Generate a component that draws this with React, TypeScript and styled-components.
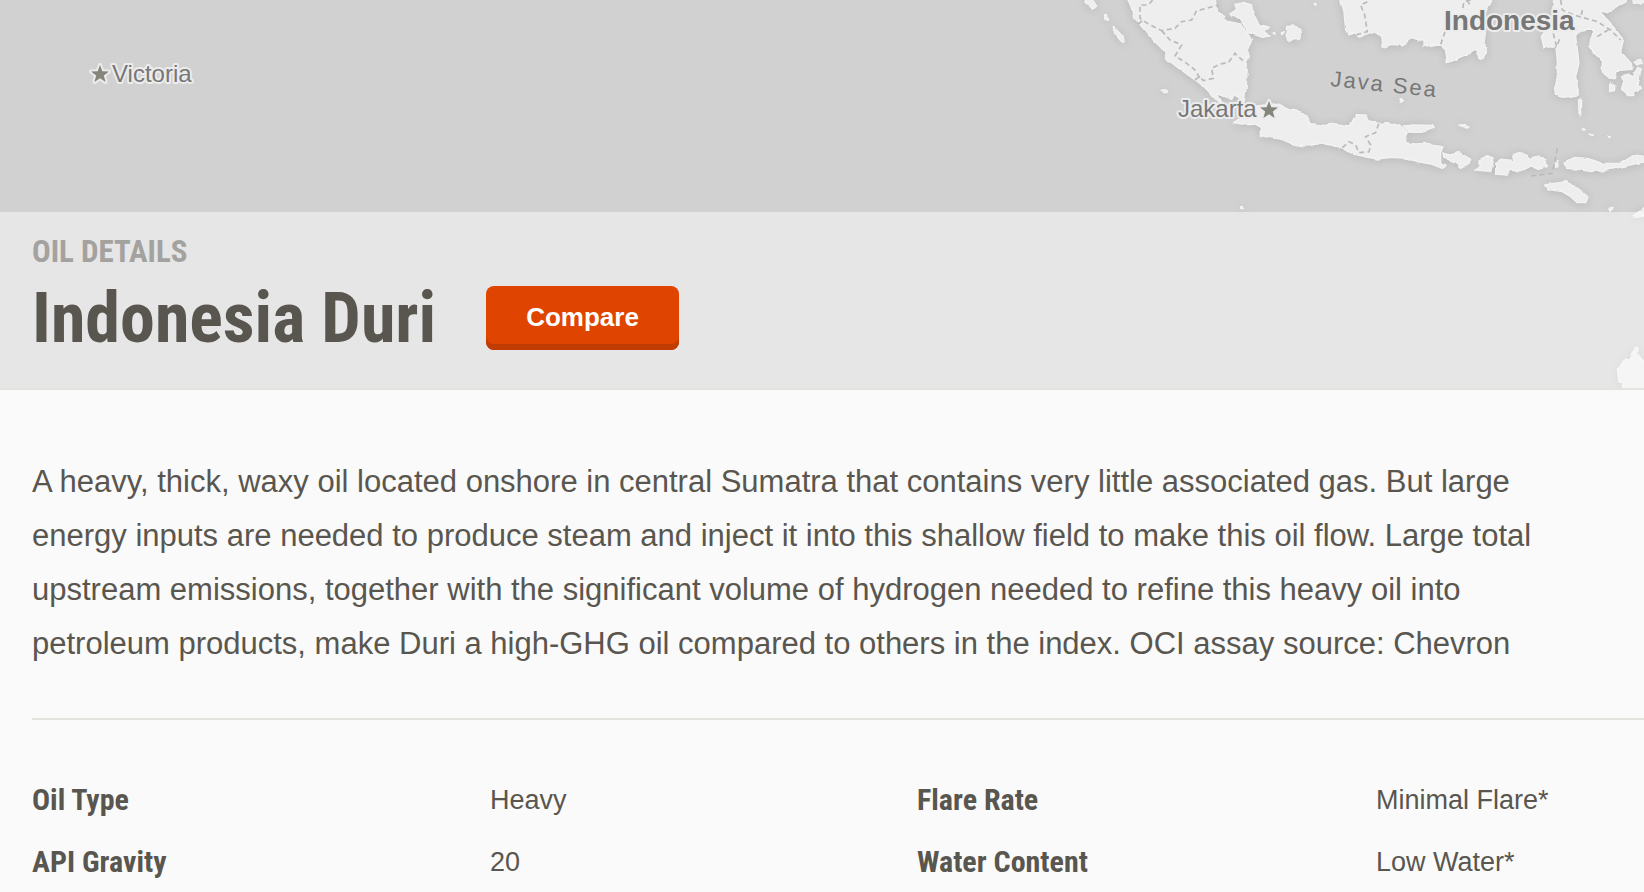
import React from "react";
import styled, { createGlobalStyle } from "styled-components";

const GlobalStyle = createGlobalStyle`
  *, *::before, *::after { box-sizing: border-box; }
  body {
    margin: 0;
    background: #fafafa;
    color: #59564f;
    font-family: "Liberation Sans", Arial, sans-serif;
    overflow-x: hidden;
  }
`;

const condensed = `"Roboto Condensed", "Arial Narrow", sans-serif`;

const Hero = styled.section`
  position: relative;
  padding-top: 212px;
  background: #d1d1d1;
  border-bottom: 2px solid #e3e4de;
  overflow: hidden;
`;

const MapCanvas = styled.svg`
  position: absolute;
  inset: 0;
  width: 100%;
  height: 100%;
`;

const Coast = styled.g`
  fill: #eeeeee;
  stroke: #f3f3f3;
  stroke-width: 4;
  stroke-linejoin: round;
`;

const Borders = styled.g`
  fill: none;
  stroke: #bababa;
  stroke-width: 5;
  stroke-dasharray: 15 10;
`;

const PlaceLabel = styled.text<{ $country?: boolean }>`
  font-size: ${(p) => (p.$country ? 28 : 24)}px;
  font-weight: ${(p) => (p.$country ? 700 : 400)};
  fill: #777777;
  stroke: #ececec;
  stroke-width: 4px;
  stroke-linejoin: round;
  paint-order: stroke;
`;

const SeaLabel = styled.text`
  font-size: 22px;
  letter-spacing: 2px;
  fill: #777777;
`;

const Star = styled.path`
  fill: #85857c;
  stroke: #ececec;
  stroke-width: 4px;
  stroke-linejoin: round;
  paint-order: stroke;
`;

const TitleBar = styled.header`
  position: relative;
  padding: 24px 32px 30px;
  background: rgba(252, 252, 252, 0.5);
`;

const Eyebrow = styled.p`
  margin: 0 0 10px;
  font: 700 31px/32px ${condensed};
  text-transform: uppercase;
  color: #a3a29f;
`;

const TitleRow = styled.div`
  display: flex;
  align-items: center;
  gap: 50px;
`;

const Title = styled.h1`
  margin: 0;
  font: 700 70px/80px ${condensed};
`;

const CompareButton = styled.button`
  height: 64px;
  padding: 0 40px 2px;
  border: 0;
  border-radius: 8px;
  background: #df4500;
  box-shadow: inset 0 -6px 0 #bf3d03;
  color: #ffffff;
  font: 700 26px/32px "Liberation Sans", Arial, sans-serif;
  cursor: pointer;
`;

const Content = styled.main`
  padding: 65px 0 0 32px;
`;

const Description = styled.p`
  margin: 0;
  padding: 0 96px 47px 0;
  font-size: 31px;
  line-height: 54px;
`;

const Facts = styled.div`
  display: grid;
  grid-template-columns: 885fr 727fr;
  border-top: 2px solid #e3e4de;
  padding-top: 49px;
`;

const FactList = styled.dl<{ $columns: string }>`
  display: grid;
  grid-template-columns: ${(p) => p.$columns};
  align-content: start;
  margin: 0;
`;

const FactName = styled.dt`
  font: 700 30px/62px ${condensed};
`;

const FactValue = styled.dd`
  margin: 0;
  font-size: 27px;
  line-height: 62px;
`;

const starPath = "M0-9 2.3-2.8 9-2.6 3.8 1.4 5.6 8 0 4.2-5.6 8-3.8 1.4-9-2.6-2.3-2.8Z";

const westernLand = [
  "M200-10 215 25 220 50 245 80 270 110 315 155 318 175 350 200 405 240 430 258 460 290 478 310 486 308 472 282 490 288 515 298 522 280 535 292 552 306 558 270 562 205 552 185 568 170 562 150 575 122 568 108 545 72 490 62 495 48 470 35 465-10Z",
  "M510 42 530 28 525 14 550 7 575 15 582 50 600 75 628 82 615 93 630 108 608 112 565 98 555 75 540 55 515 48Z",
  "M680 80 700 78 722 88 725 105 715 120 705 115 685 125 678 105Z",
  "M75-5 95-5 110 18 100 27 80 12Z",
  "M130 45 138 43 148 62 135 58Z",
  "M160 78 175 95 190 110 192 130 180 120 160 95Z",
  "M303 268 318 266 323 276 312 278Z",
  "M542 620 548 620 547 626 542 626Z",
  "M764 12 771 10 771 15 767 17Z",
  "M640 98 644 98 644 102 640 102Z",
  "M664 97 670 98 668 103 664 102Z",
];

const easternLand = [
  "M-332 368-307 352-300 340-262 318-212 312-187 318-162 330-132 335-112 350-102 370-62 376-22 371 18 378 30 355 38 344 63 345 73 362 103 370 133 368 140 377 170 375 190 398 182 412 187 428 215 432 250 430 297 438 290 460 290 490 303 500 295 505 260 492 220 485 190 475 140 472 100 477 48 467 28 462-7 443-52 432-82 432-112 438-152 433-187 418-227 412-255 405-247 386-252 380-272 370-307 372Z",
  "M180 378 210 375 265 376 270 383 245 390 230 397 195 397Z",
  "M-12-5 0 35 5 90 15 105 30 98 45 110 80 98 110 105 115 145 165 130 175 138 205 112 240 125 240 140 285 132 305 150 310 188 400 150 405 178 418 175 428 145 420 130 425 90 410 80 430 20 445-5Z",
  "M630-5 625 40 605 90 592 110 600 145 635 135 640 180 640 230 632 265 635 285 660 292 700 285 703 275 695 230 705 190 695 105 725 88 750 88 735 140 775 180 775 215 800 238 815 235 815 212 865 208 862 190 830 155 838 120 800 70 765 32 790 38 840 5 850-5Z",
  "M832 228 858 222 866 232 878 205 890 210 885 240 878 252 893 265 870 275 865 290 850 290 845 275 832 265 840 248Z",
  "M870 185 890 178 895 190 880 198Z",
  "M800 250 812 258 812 272 800 275Z",
  "M866-5 905-5 905 10 890 12 880 5 868 8Z",
  "M704 300 710 298 710 345 705 340Z",
  "M297 460 320 465 345 457 380 478 375 490 352 502 335 485 300 475Z",
  "M405 480 430 467 450 475 440 515 415 512 392 510 405 500Z",
  "M455 490 480 478 510 482 505 465 525 458 548 462 555 480 575 470 605 475 610 500 580 508 565 495 530 512 500 512 490 525 455 522Z",
  "M632 490 640 485 642 500 634 502Z",
  "M660 490 690 472 730 475 780 490 830 490 870 465 905 470 905 485 850 497 780 512 740 515 700 508 670 505Z",
  "M602 555 640 548 670 545 690 560 715 575 732 592 725 608 700 608 680 590 655 575 610 568Z",
  "M348 375 365 373 376 380 360 381Z",
  "M168 297 176 295 178 302 171 304Z",
  "M715 386 724 389 718 391Z",
  "M732 402 750 406 740 406Z",
  "M792 407 799 407 797 411Z",
  "M792 628 808 622 805 632 795 634Z",
  "M866 648 885 635 905 620 905 645 870 655Z",
  "M835 1170 835 1150 825 1150 820 1105 845 1080 862 1078 863 1062 876 1038 882 1045 880 1060 905 1095 905 1170Z",
];

const westernBorders = [
  "M278 0 265 15 240 15 240 55 262 70 305 92 345 85 365 65 395 60 410 32 440 25 475 15",
  "M235 72 250 60",
  "M305 92 330 120 365 135 345 168 380 190 405 210 420 235",
  "M405 240 418 230 430 242 460 235 455 205 480 192 505 188 525 160 555 188",
];

const easternBorders = [
  "M70 5 50 15 62 45 70 95 35 105",
  "M380 0 360 5 355 30 M303 95 288 140",
  "M370 0 380 20",
  "M-5 443 15 425 35 435 45 458 75 455 80 435 65 410 95 398 105 368",
  "M650 0 655 30 690 45 760 65 800 90 830 120",
  "M715 30 710 55 M760 110 800 85",
  "M628 100 638 140 650 110",
  "M640 445 625 520 560 528",
];

function RegionMap() {
  return (
    <MapCanvas viewBox="0 0 1644 388" preserveAspectRatio="xMaxYMin slice" role="img" aria-label="Map of Indonesia">
      <defs>
        <filter id="coastline" x="1040" y="-20" width="640" height="430" filterUnits="userSpaceOnUse" colorInterpolationFilters="sRGB">
          <feTurbulence type="fractalNoise" baseFrequency="0.14" numOctaves="1" seed="4" result="noise" />
          <feDisplacementMap in="SourceGraphic" in2="noise" scale="4" xChannelSelector="R" yChannelSelector="G" result="land" />
          <feDropShadow in="land" dx="0" dy="1" stdDeviation="4" floodColor="#000000" floodOpacity="0.12" />
        </filter>
      </defs>
      <g filter="url(#coastline)">
        <Coast transform="translate(1060 0) scale(0.3333)">
          {westernLand.map((d) => <path key={d} d={d} />)}
        </Coast>
        <Coast transform="translate(1344 0) scale(0.3333)">
          {easternLand.map((d) => <path key={d} d={d} />)}
        </Coast>
      </g>
      <Borders transform="translate(1060 0) scale(0.3333)">
        {westernBorders.map((d) => <path key={d} d={d} />)}
      </Borders>
      <Borders transform="translate(1344 0) scale(0.3333)">
        {easternBorders.map((d) => <path key={d} d={d} />)}
      </Borders>
      <Star d={starPath} transform="translate(100 74)" />
      <PlaceLabel x="112" y="82">Victoria</PlaceLabel>
      <PlaceLabel x="1178" y="117">Jakarta</PlaceLabel>
      <Star d={starPath} transform="translate(1269 110)" />
      <PlaceLabel $country x="1444" y="30">Indonesia</PlaceLabel>
      <SeaLabel transform="translate(1330 86) rotate(6)">Java Sea</SeaLabel>
    </MapCanvas>
  );
}

const leftFacts = [
  ["Oil Type", "Heavy"],
  ["API Gravity", "20"],
];

const rightFacts = [
  ["Flare Rate", "Minimal Flare*"],
  ["Water Content", "Low Water*"],
];

function FactColumn({ facts, columns }: { facts: string[][]; columns: string }) {
  return (
    <FactList $columns={columns}>
      {facts.map(([name, value]) => (
        <React.Fragment key={name}>
          <FactName>{name}</FactName>
          <FactValue>{value}</FactValue>
        </React.Fragment>
      ))}
    </FactList>
  );
}

export default function App() {
  return (
    <>
      <GlobalStyle />
      <Hero>
        <RegionMap />
        <TitleBar>
          <Eyebrow>Oil Details</Eyebrow>
          <TitleRow>
            <Title>Indonesia Duri</Title>
            <CompareButton type="button">Compare</CompareButton>
          </TitleRow>
        </TitleBar>
      </Hero>
      <Content>
        <Description>
          A heavy, thick, waxy oil located onshore in central Sumatra that contains very little
          associated gas. But large energy inputs are needed to produce steam and inject it into this
          shallow field to make this oil flow. Large total upstream emissions, together with the
          significant volume of hydrogen needed to refine this heavy oil into petroleum products, make
          Duri a high-GHG oil compared to others in the index. OCI assay source: Chevron
        </Description>
        <Facts>
          <FactColumn facts={leftFacts} columns="458fr 427fr" />
          <FactColumn facts={rightFacts} columns="459fr 268fr" />
        </Facts>
      </Content>
    </>
  );
}
